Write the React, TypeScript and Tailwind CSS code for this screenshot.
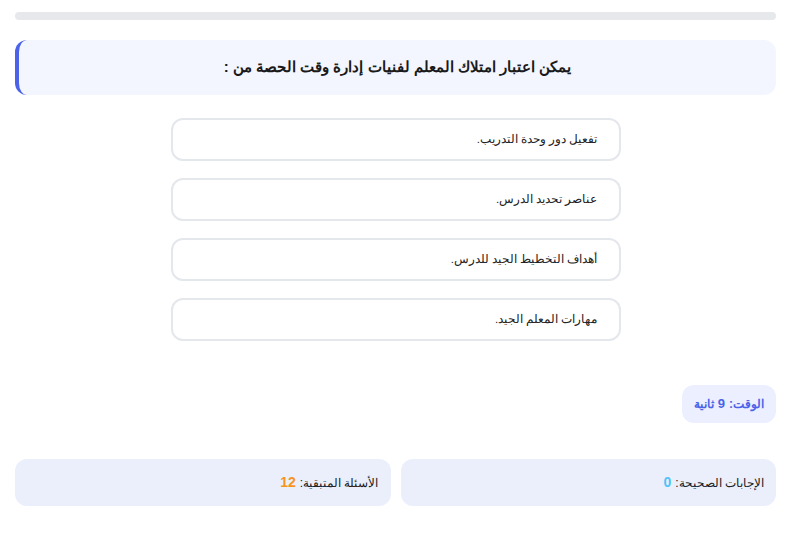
const options = [
  'تفعيل دور وحدة التدريب.',
  'عناصر تحديد الدرس.',
  'أهداف التخطيط الجيد للدرس.',
  'مهارات المعلم الجيد.',
];

export default function App() {
  return (
    <div
      dir="rtl"
      className="min-h-screen bg-white px-[15px] pt-[12px] text-[#222]"
      style={{ fontFamily: '"Liberation Sans", Arial, sans-serif' }}
    >
      {/* progress */}
      <div className="h-[8px] w-full rounded-full bg-[#e6e8eb]" />

      {/* question */}
      <div className="mt-[20px] flex h-[55px] items-center justify-center rounded-xl border-l-4 border-[#4a63e8] bg-[#f3f6fe]">
        <h2 className="text-[15px] font-bold text-[#1a1a1a]">يمكن اعتبار امتلاك المعلم لفنيات إدارة وقت الحصة من :</h2>
      </div>

      {/* options */}
      <div className="mx-auto mt-[23px] flex w-[450px] flex-col gap-[17px]">
        {options.map((o) => (
          <button
            key={o}
            className="flex h-[43px] items-center rounded-xl border-2 border-[#e4e7eb] bg-white px-[21px] text-right text-[11.5px] text-[#222]"
          >
            {o}
          </button>
        ))}
      </div>

      {/* timer */}
      <div className="mt-[44px] flex">
        <div className="flex h-[38px] items-center rounded-xl bg-[#ebefff] px-[12px] text-[12px] font-bold text-[#4a63e8]">
          الوقت: <span className="mx-1 text-[13px]">9</span> ثانية
        </div>
      </div>

      {/* stats */}
      <div className="mt-[36px] grid grid-cols-2 gap-[10px]">
        <div className="flex h-[47px] items-center rounded-xl bg-[#ebeffc] px-[12px] text-[12px] text-[#222]">
          الإجابات الصحيحة: <span className="mr-1 text-[14px] font-bold text-[#4fc3f7]">0</span>
        </div>
        <div className="flex h-[47px] items-center rounded-xl bg-[#ebeffc] px-[12px] text-[12px] text-[#222]">
          الأسئلة المتبقية: <span className="mr-1 text-[14px] font-bold text-[#f7941d]">12</span>
        </div>
      </div>
    </div>
  );
}
